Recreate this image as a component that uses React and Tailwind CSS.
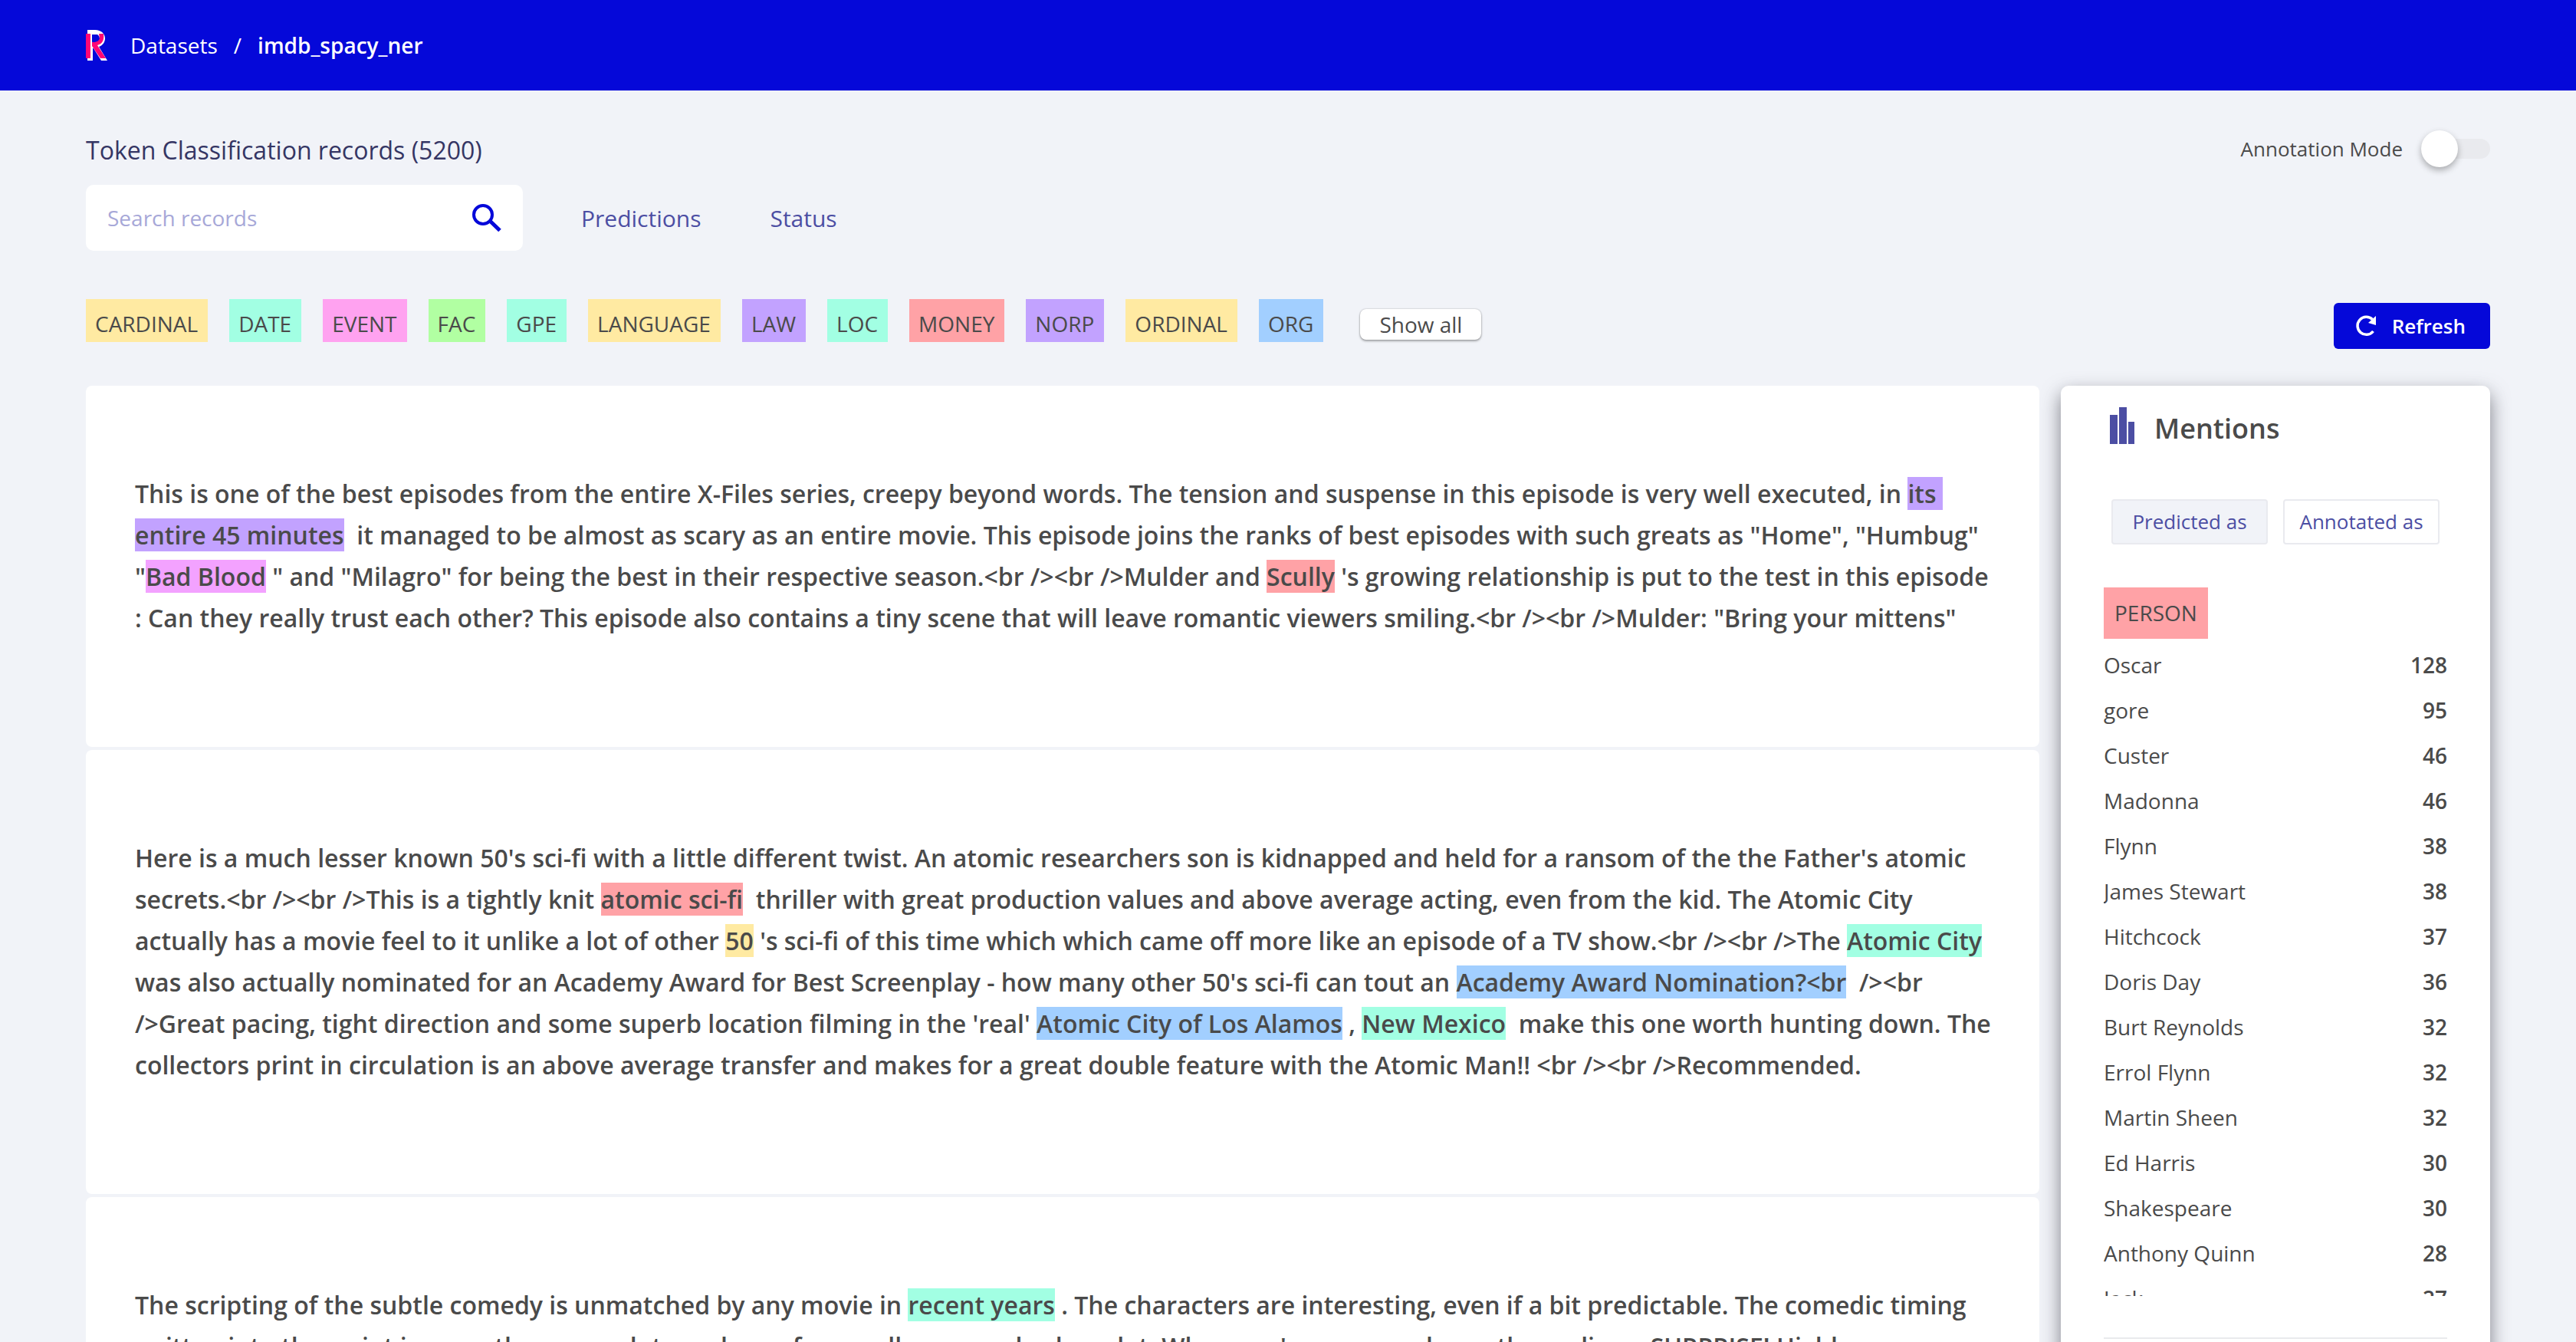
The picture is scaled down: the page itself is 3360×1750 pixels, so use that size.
const C = {
  yellow: "bg-[#ffeaa2]",
  mint: "bg-[#a2ffe3]",
  pink: "bg-[#ffa2f0]",
  orchid: "bg-[#f3a2ff]",
  green: "bg-[#b1ffa2]",
  purple: "bg-[#c2a2ff]",
  red: "bg-[#ffa2a6]",
  blue: "bg-[#a2cfff]",
};

const labels = [
  ["CARDINAL", C.yellow],
  ["DATE", C.mint],
  ["EVENT", C.pink],
  ["FAC", C.green],
  ["GPE", C.mint],
  ["LANGUAGE", C.yellow],
  ["LAW", C.purple],
  ["LOC", C.mint],
  ["MONEY", C.red],
  ["NORP", C.purple],
  ["ORDINAL", C.yellow],
  ["ORG", C.blue],
];

const mentions = [
  ["Oscar", 128],
  ["gore", 95],
  ["Custer", 46],
  ["Madonna", 46],
  ["Flynn", 38],
  ["James Stewart", 38],
  ["Hitchcock", 37],
  ["Doris Day", 36],
  ["Burt Reynolds", 32],
  ["Errol Flynn", 32],
  ["Martin Sheen", 32],
  ["Ed Harris", 30],
  ["Shakespeare", 30],
  ["Anthony Quinn", 28],
  ["Jack", 27],
];

function E({ c, children }) {
  return <mark className={`text-inherit ${c}`}>{children}</mark>;
}

function Record({ children }) {
  return (
    <article className="rounded-[8px] bg-white pt-[114px] pr-15 pb-[141px] pl-16">
      <p className="text-[32px] leading-[54px] font-semibold whitespace-pre-wrap">{children}</p>
    </article>
  );
}

function Logo() {
  return (
    <svg className="h-10 w-7" viewBox="0 0 28 40" role="img" aria-label="Rubrix">
      <path
        fill="#fff"
        fillRule="evenodd"
        d="M2 0h10c8 0 13 5 13 11 0 5-3 9-8 11l11 18h-8L10 24H9v16H2zM9 6v12h3c4 0 6-2 6-6s-2-6-6-6z"
      />
      <path fill="#ff0675" d="M0 5h6v32H0z" />
      <path fill="#ff0675" d="M17 5h6c1 8-1 13-8 15l11 17h-7L8 21v-5c7 0 9-2 10-5z" />
      <path fill="#0508d9" d="M9 6h6c3 2 2 8-2 9l-5 1V6z" />
    </svg>
  );
}

export default function App() {
  return (
    <div className="h-screen overflow-hidden bg-[#f1f3f8] font-['Open_Sans','Noto_Sans',sans-serif] text-[#4a4a4a]">
      <header className="flex h-[118px] items-center bg-[#0508d9] px-28 text-[28px] leading-10 text-white">
        <Logo />
        <nav aria-label="Breadcrumb" className="ml-[30px] flex gap-[21px]">
          <a href="#datasets">Datasets</a>
          <span>/</span>
          <a href="#imdb" className="font-semibold">imdb_spacy_ner</a>
        </nav>
      </header>

      <main className="px-28 pt-[52px]">
        <div className="flex h-[52px] items-start justify-between">
          <h1 className="text-[32px] leading-[52px] text-[#353664]">Token Classification records (5200)</h1>
          <label className="relative flex h-12 items-center gap-6 text-[26px] leading-9">
            Annotation Mode
            <input type="checkbox" role="switch" className="sr-only" />
            <span className="flex h-[26px] w-[90px] items-center rounded-full bg-[#e9eaee]">
              <span className="size-12 shrink-0 rounded-full bg-white shadow-[0_4px_8px_rgba(0,0,0,0.3)]" />
            </span>
          </label>
        </div>

        <div className="mt-[19px] flex h-[86px] items-center text-[30px]">
          <label className="flex h-full w-[570px] items-center rounded-[10px] bg-white pr-[26px] pl-7">
            <input
              type="text"
              aria-label="Search records"
              placeholder="Search records"
              className="min-w-0 flex-1 bg-transparent text-[28px] outline-none placeholder:text-[#a7a8d8]"
            />
            <svg className="h-9 w-10" viewBox="0 0 40 36" fill="none" stroke="#0508d9" aria-hidden="true">
              <circle cx="14" cy="14" r="12" strokeWidth="4" />
              <path d="M23 22l13 12.500" strokeWidth="5" />
            </svg>
          </label>
          <button type="button" className="ml-[76px] text-[#4c4ea3]">Predictions</button>
          <button type="button" className="ml-[90px] text-[#4c4ea3]">Status</button>
        </div>

        <div className="mt-[63px] flex items-start justify-between">
          <div className="flex gap-7 text-[28px]">
            {labels.map(([name, color]) => (
              <span key={name} className={`h-14 pt-3 pr-[13px] pl-3 leading-10 ${color}`}>{name}</span>
            ))}
            <button
              type="button"
              className="mt-[13px] ml-5 h-10 rounded-[8px] bg-white px-[25px] leading-9 shadow-[0_2px_3px_rgba(0,0,0,0.3),0_0_2px_rgba(0,0,0,0.3)]"
            >
              Show all
            </button>
          </div>
          <button
            type="button"
            className="mt-[5px] flex h-[60px] items-center gap-5 rounded-[6px] bg-[#0508d9] pr-8 pl-7 text-[26px] font-semibold text-white"
          >
            <svg className="size-7" viewBox="0 0 28 28" fill="none" aria-hidden="true">
              <path d="M22.500 5.500A11.500 11.500 0 1 0 23.500 21" stroke="#fff" strokeWidth="3.500" />
              <path d="M27 1v12l-10-3z" fill="#fff" />
            </svg>
            Refresh
          </button>
        </div>

        <div className="mt-12 flex items-start gap-7">
          <section className="flex min-w-0 flex-1 flex-col gap-1" aria-label="Records">
            <Record>
              This is one of the best episodes from the entire X-Files series, creepy beyond words. The tension and
              suspense in this episode is very well executed, in <E c={C.purple}>its entire 45 minutes</E>
              {"  "}it managed to be almost as scary as an entire movie. This episode joins the ranks of best episodes
              with such greats as "Home", "Humbug" "<E c={C.orchid}>Bad Blood</E>
              {' " and "Milagro" for being the best in their respective season.<br /><br />Mulder and '}
              <E c={C.red}>Scully</E>
              {" 's growing relationship is put to the test in this episode : Can they really trust each other? This episode also contains a tiny scene that will leave romantic viewers smiling.<br /><br />Mulder: \"Bring your mittens\""}
            </Record>
            <Record>
              {"Here is a much lesser known 50's sci-fi with a little different twist. An atomic researchers son is kidnapped and held for a ransom of the the Father's atomic secrets.<br /><br />This is a tightly knit "}
              <E c={C.red}>atomic sci-fi</E>
              {"  thriller with great production values and above average acting, even from the kid. The Atomic City actually has a movie feel to it unlike a lot of other "}
              <E c={C.yellow}>50</E>
              {" 's sci-fi of this time which which came off more like an episode of a TV show.<br /><br />The "}
              <E c={C.mint}>Atomic City</E>
              {" was also actually nominated for an Academy Award for Best Screenplay - how many other 50's sci-fi can tout an "}
              <E c={C.blue}>{"Academy Award Nomination?<br"}</E>
              {"  /><br />Great pacing, tight direction and some superb location filming in the 'real' "}
              <E c={C.blue}>Atomic City of Los Alamos</E>
              {" , "}
              <E c={C.mint}>New Mexico</E>
              {"  make this one worth hunting down. The collectors print in circulation is an above average transfer and makes for a great double feature with the Atomic Man!! <br /><br />Recommended."}
            </Record>
            <Record>
              {"The scripting of the subtle comedy is unmatched by any movie in "}
              <E c={C.mint}>recent years</E>
              {" . The characters are interesting, even if a bit predictable. The comedic timing written into the script is more than enough to make up for a well-worn and sober plot. When you're sure you know the ending... SURPRISE! Highly"}
            </Record>
          </section>

          <aside className="w-[560px] shrink-0 rounded-[10px] bg-white px-14 pt-6 pb-28 shadow-[0_10px_24px_rgba(50,50,60,0.6)]">
            <h2 className="flex h-14 items-end gap-[26px] pl-2 text-[36px] leading-[48px] font-semibold">
              <svg className="mb-1 h-12 w-8" viewBox="0 0 32 48" fill="#4c4ea3" aria-hidden="true">
                <path d="M0 10h10v38H0zM12 0h10v48H12zM24 19h9v29h-9z" />
              </svg>
              Mentions
            </h2>
            <div className="mt-[68px] grid grid-cols-2 gap-5 px-[10px] text-[26px] text-[#4c4ea3]">
              <button type="button" className="h-[59px] rounded-[4px] border-2 border-[#e9eaef] bg-[#f1f3f8]">Predicted as</button>
              <button type="button" className="h-[59px] rounded-[4px] border-2 border-[#e9eaef] bg-white">Annotated as</button>
            </div>
            <h3 className="mt-[56px] w-fit bg-[#ffa2a6] px-[14px] text-[28px] leading-[67px]">PERSON</h3>
            <ul className="h-[857px] overflow-hidden text-[28px]">
              {mentions.map(([name, count]) => (
                <li key={name} className="flex h-[59px] items-center justify-between pt-2">
                  <span>{name}</span>
                  <span className="font-semibold">{count}</span>
                </li>
              ))}
            </ul>
            <hr className="mt-[54px] border-t-2 border-[#e9eaed]" />
          </aside>
        </div>
      </main>
    </div>
  );
}
